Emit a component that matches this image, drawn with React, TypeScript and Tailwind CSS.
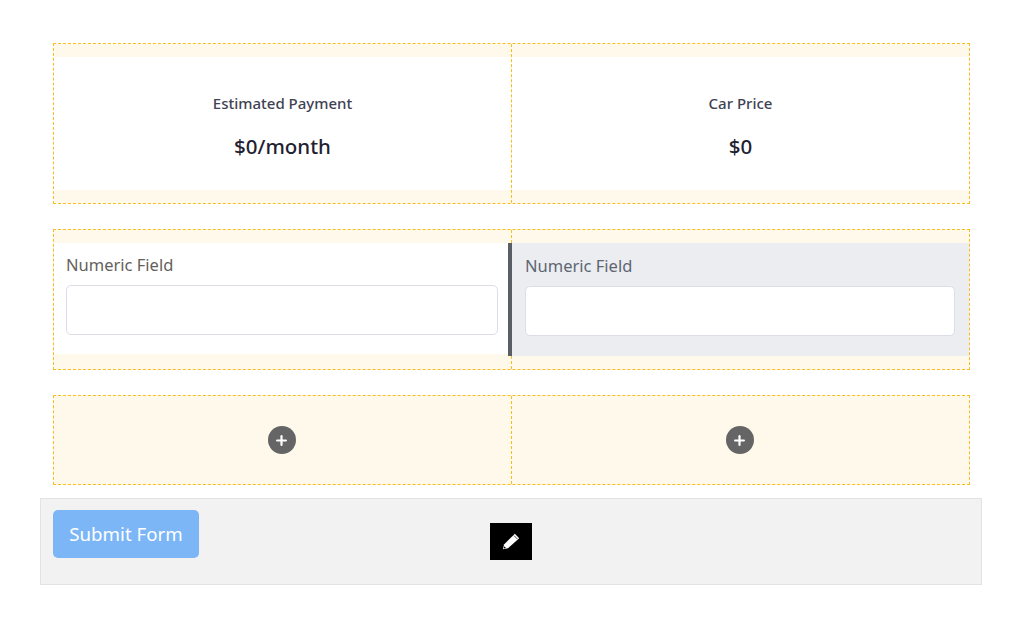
import React from 'react';
import { Plus } from 'lucide-react';

const font = "font-['Noto_Sans',sans-serif]";

// solid pencil, tip bottom-left, with a dark band under the cap
const PencilIcon = () => (
  <svg viewBox="0 0 18 18" className="w-[18px] h-[18px]">
    <path d="M1 16.2l1-4.7L12.8 .8l4.4 4.4L6 15.2z" fill="#fff" />
    <path d="M12 2.6l3.4 3.4" stroke="#000" strokeWidth="0.7" fill="none" />
    <path d="M1.8 15.4l.5-2.2 1.7 1.7z" fill="#000" />
  </svg>
);

const StatCell = ({ label, value, divider }: { label: string; value: string; divider?: boolean }) => (
  <div className={`bg-[#fff9eb] py-[13px] ${divider ? 'border-r border-dashed border-[#fbbc1f]' : ''}`}>
    <div className="bg-white h-[133px] flex flex-col items-center pt-[36px]">
      <div className="text-[15px] leading-[21px] font-medium text-[#3f4254]">{label}</div>
      <div className="text-[20.5px] leading-[30px] font-medium text-[#1e2130] mt-[17px]">{value}</div>
    </div>
  </div>
);

const FieldBlock = ({ active }: { active?: boolean }) => (
  <>
    <div className={`text-[16.5px] leading-[25px] ${active ? 'text-[#5d6573]' : 'text-[#655f5c]'}`}>Numeric Field</div>
    <input
      type="text"
      className="block w-full h-[50px] mt-[8px] bg-white border border-[#dcdde6] rounded-[5px] outline-none"
    />
  </>
);

const AddCell = ({ divider }: { divider?: boolean }) => (
  <div className={`h-[88px] flex items-center justify-center pr-[2px] ${divider ? 'border-r border-dashed border-[#fbbc1f]' : ''}`}>
    <button className="w-[28px] h-[28px] rounded-full bg-[#656565] flex items-center justify-center">
      <Plus className="w-[15px] h-[15px] text-white" strokeWidth={3.5} />
    </button>
  </div>
);

export default function App() {
  return (
    <div className={`bg-white min-h-[623px] pt-[43px] px-[40px] ${font}`}>
      <div className="w-[917px] ml-[13px] flex flex-col gap-[25px]">
        <div className="grid grid-cols-[458px_1fr] border border-dashed border-[#fbbc1f] h-[161px]">
          <StatCell label="Estimated Payment" value="$0/month" divider />
          <StatCell label="Car Price" value="$0" />
        </div>

        <div className="grid grid-cols-[458px_1fr] border border-dashed border-[#fbbc1f] h-[141px] bg-[#fff9eb]">
          <div className="border-r border-dashed border-[#fbbc1f] pt-[13px]">
            <div className="bg-white h-[111px] mr-[3px] pl-[12px] pr-[10px] pt-[9px]">
              <FieldBlock />
            </div>
          </div>
          <div className="pt-[13px] -ml-[4px]">
            <div className="bg-[#ecedf1] h-[113px] border-l-[4px] border-[#5a5f66] pl-[13px] pr-[14px] pt-[10px]">
              <FieldBlock active />
            </div>
          </div>
        </div>

        <div className="grid grid-cols-[458px_1fr] border border-dashed border-[#fbbc1f] h-[90px] bg-[#fff9eb]">
          <AddCell divider />
          <AddCell />
        </div>
      </div>

      <div className="relative mt-[13px] w-[942px] h-[87px] bg-[#f2f2f2] border border-[#e3e3e3] pl-[12px] pt-[11px]">
        <button className="w-[146px] h-[48px] bg-[#7cb6f6] rounded-[5px] text-white text-[18.7px]">Submit Form</button>
        <div className="absolute left-[449px] top-[24px] w-[42px] h-[37px] bg-black flex items-center justify-center">
          <PencilIcon />
        </div>
      </div>
    </div>
  );
}
